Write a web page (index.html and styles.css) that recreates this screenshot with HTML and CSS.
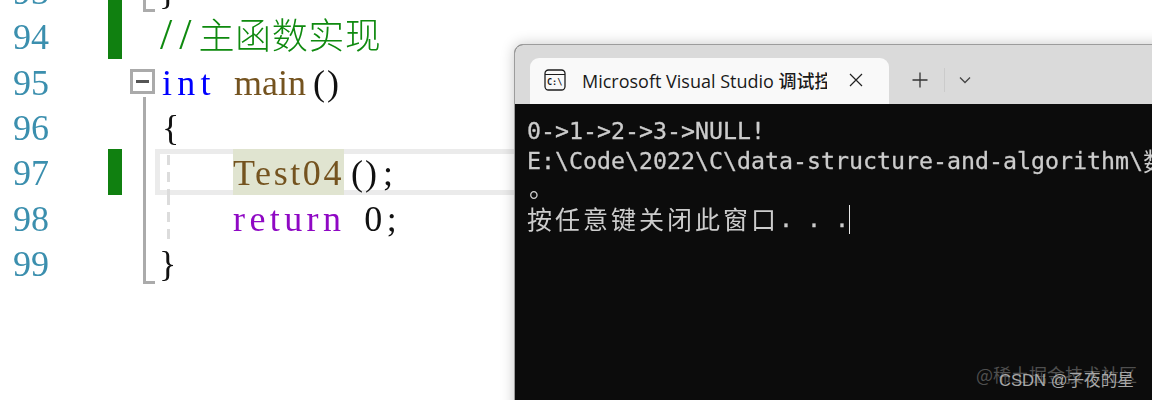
FILE: index.html
```html
<!DOCTYPE html>
<html lang="zh">
<head>
<meta charset="utf-8">
<title>Visual Studio debug console</title>
<link rel="stylesheet" href="styles.css">
</head>
<body>
<main class="editor">
  <div class="row">
    <span class="num">93</span><span class="bar on"></span><span class="fold end"></span>
    <span class="code"><span class="plain close">}</span></span>
  </div>
  <div class="row">
    <span class="num">94</span><span class="bar on"></span><span class="fold"></span>
    <span class="code"><span class="comment"><span class="slashes">//</span>主函数实现</span></span>
  </div>
  <div class="row">
    <span class="num">95</span><span class="bar"></span>
    <span class="fold open"><span class="foldbox"></span></span>
    <span class="code"><span class="kw w-int">int</span><span class="space"></span><span class="fn w-main">main</span><span class="plain w-parens">()</span></span>
  </div>
  <div class="row">
    <span class="num">96</span><span class="bar"></span><span class="fold line"></span>
    <span class="code"><span class="plain">{</span></span>
  </div>
  <div class="row">
    <span class="num">97</span><span class="bar on"></span><span class="fold line"></span>
    <span class="code current guide"><span class="indent"></span><span class="fn w-test match">Test04</span><span class="plain w-parens">()</span><span class="plain w-semi">;</span></span>
  </div>
  <div class="row">
    <span class="num">98</span><span class="bar"></span><span class="fold line"></span>
    <span class="code guide"><span class="indent"></span><span class="ctl w-return">return</span><span class="space"></span><span class="plain w-zero">0;</span></span>
  </div>
  <div class="row">
    <span class="num">99</span><span class="bar"></span><span class="fold end"></span>
    <span class="code"><span class="plain close">}</span></span>
  </div>
</main>

<section class="window">
  <header class="titlebar">
    <div class="tab">
      <svg class="tab-icon" width="22" height="22" viewBox="0 0 22 22" aria-hidden="true">
        <rect x="1" y="1" width="20" height="20" rx="3.5" fill="none" stroke="#1c1c1c" stroke-width="1.3"/>
        <line x1="1" y1="5.5" x2="21" y2="5.5" stroke="#1c1c1c" stroke-width="1.2"/>
        <text x="3" y="16" class="tab-icon-text">C:\</text>
      </svg>
      <span class="tab-title">Microsoft Visual Studio 调试控制台</span>
      <svg class="tab-close" width="14" height="14" viewBox="0 0 14 14" aria-hidden="true">
        <path d="M1 1L13 13M13 1L1 13" stroke="#222" stroke-width="1.2" fill="none"/>
      </svg>
    </div>
    <div class="tab-actions">
      <svg width="16" height="16" viewBox="0 0 16 16" aria-hidden="true">
        <path d="M8 0.5V15.5M0.5 8H15.5" stroke="#333" stroke-width="1.3" fill="none"/>
      </svg>
      <span class="divider"></span>
      <svg width="12" height="8" viewBox="0 0 12 8" aria-hidden="true">
        <path d="M1 1.5L6 6.5L11 1.5" stroke="#444" stroke-width="1.3" fill="none"/>
      </svg>
    </div>
  </header>
  <div class="terminal">
    <div class="term-line">0-&gt;1-&gt;2-&gt;3-&gt;NULL!</div>
    <div class="term-line">E:\Code\2022\C\data-structure-and-algorithm\<span class="cjk">数据结构与算法</span></div>
    <div class="term-line"><span class="cjk period">。</span></div>
    <div class="term-line"><span class="cjk">按任意键关闭此窗口</span>. . .<span class="cursor"></span></div>
  </div>
  <div class="mark-juejin">@稀土掘金技术社区</div>
  <div class="mark-csdn">CSDN @子夜的星</div>
</section>
</body>
</html>
```
FILE: styles.css
```css
* { box-sizing: border-box; }
html, body { margin: 0; height: 400px; overflow: hidden; background: #fff; }

.editor {
  margin-top: -32px;
  display: grid;
  grid-auto-rows: 45.33px;
  font-family: "Liberation Serif", "Noto Sans CJK SC", serif;
  font-size: 36px;
  line-height: 49px;
  filter: blur(0.35px);
}
.row {
  display: grid;
  grid-template-columns: 13px 95px 14px 33px 1fr;
  grid-template-rows: 45.33px;
}
.num { grid-column: 2; color: #3b8fae; }
.bar { grid-column: 3; }
.bar.on { background: #108010; }
.fold { grid-column: 4; position: relative; }
.code { grid-column: 5; padding-left: 7px; position: relative; white-space: nowrap; display: flex; }

.fold.line::before,
.fold.open::before,
.fold.end::before {
  content: "";
  position: absolute;
  left: 21px;
  width: 3px;
  top: 0;
  bottom: 0;
  background: #ababab;
}
.fold.open::before { top: 38px; }
.fold.end::before { bottom: 1px; }
.fold.end::after {
  content: "";
  position: absolute;
  left: 21px;
  right: 0;
  bottom: 1px;
  height: 3px;
  background: #ababab;
}
.foldbox {
  position: absolute;
  left: 8px;
  top: 10px;
  width: 25px;
  height: 25px;
  border: 3px solid #aaa;
  background: #fff;
}
.foldbox::after {
  content: "";
  position: absolute;
  left: 3px;
  right: 3px;
  top: 8px;
  height: 3px;
  background: #555;
}

.current {
  border: 5px solid #ebebeb;
  border-right: 0;
  padding-left: 2px;
  line-height: 39px;
}
.guide::before {
  content: "";
  position: absolute;
  left: 12px;
  top: 0;
  bottom: 0;
  width: 3px;
  background: repeating-linear-gradient(#dcdcdc 0 10px, transparent 10px 17px);
}
.current.guide::before { left: 7px; top: 1px; bottom: -5px; }

.plain { color: #111; }
.close { margin-left: -3px; }
.comment { color: #0f8a0f; margin-left: -2px; letter-spacing: 0.6px; font-weight: 300; }
.slashes { letter-spacing: 7px; font-size: 44px; line-height: 0; }
.kw { color: #0000ff; }
.fn { color: #74531f; }
.ctl { color: #8f08c4; }
.space { width: 18px; }
.indent { width: 71px; flex: none; }
.w-int { letter-spacing: 5.3px; }
.w-parens { letter-spacing: 2px; width: 36px; padding-left: 7px; }
.w-test { letter-spacing: 2.6px; width: 111px; }
.w-return { letter-spacing: 4.4px; margin-right: 1px; }
.w-semi { width: 18px; margin-left: 3px; }
.w-zero { letter-spacing: 4.5px; }
.match {
  background: #e0e4d0;
  margin-top: -5px;
  margin-bottom: -5px;
  line-height: 49px;
}

.window {
  position: absolute;
  left: 514px;
  top: 44px;
  right: -20px;
  bottom: -20px;
  border: 1px solid #9c9c9c;
  border-radius: 9px 0 0 0;
  background: #0c0c0c;
  box-shadow: 0 0 14px rgba(0, 0, 0, 0.22);
  display: flex;
  flex-direction: column;
  overflow: hidden;
}
.titlebar {
  height: 59px;
  flex: none;
  background: #dadada;
  display: flex;
  align-items: flex-end;
  padding-left: 15px;
}
.tab {
  width: 359px;
  height: 46px;
  background: #f9f9f9;
  border-radius: 9px 9px 0 0;
  display: flex;
  align-items: center;
  padding: 0 0 2px 14px;
}
.tab-icon { flex: none; }
.tab-icon-text { font: 700 8.5px "DejaVu Sans Mono", monospace; fill: #1c1c1c; }
.tab-title {
  margin-left: 16px;
  width: 245px;
  overflow: hidden;
  white-space: nowrap;
  font-family: "Open Sans", "Noto Sans CJK SC", sans-serif;
  font-size: 18px;
  font-weight: 500;
  color: #1a1a1a;
}
.tab-close { margin-left: 22px; flex: none; }
.tab-actions {
  display: flex;
  align-items: center;
  height: 46px;
  padding-bottom: 2px;
  margin-left: 23px;
}
.divider { width: 1px; height: 24px; background: #cbcbcb; margin: 0 14px 0 16px; }

.terminal {
  flex: 1;
  padding: 12px 0 0 12px;
  font-family: "DejaVu Sans Mono", monospace;
  font-size: 23.25px;
  line-height: 29.5px;
  color: #cccccc;
  white-space: nowrap;
  -webkit-text-stroke: 0.3px #cccccc;
  filter: blur(0.3px);
}
.term-line { height: 29.5px; display: flex; align-items: center; }
.term-line:last-child { height: 29px; }
.cjk {
  font-family: "Noto Sans CJK SC", sans-serif;
  font-size: 25px;
  letter-spacing: 3px;
  -webkit-text-stroke: 0;
}
.period { margin: -6px 0 0 2px; }
.cursor {
  width: 1px;
  height: 29px;
  background: #e8e8e8;
}

.mark-juejin,
.mark-csdn {
  position: absolute;
  white-space: nowrap;
}
.mark-juejin {
  left: 461px;
  top: 316px;
  font: 18px "Noto Sans CJK SC", sans-serif;
  color: #4f4f4f;
}
.mark-csdn {
  left: 484px;
  top: 322px;
  font: 16.6px "Liberation Sans", "Noto Sans CJK SC", sans-serif;
  color: #a8a8a8;
}
```
